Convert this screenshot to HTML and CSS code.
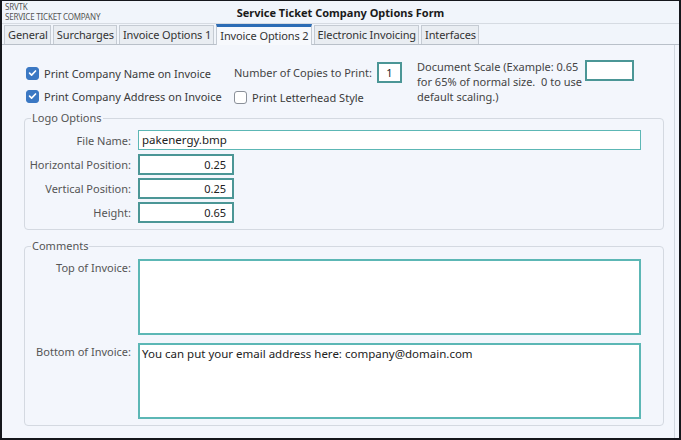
FILE: index.html
```html
<!DOCTYPE html>
<html>
<head>
<meta charset="utf-8">
<link rel="stylesheet" href="styles.css">
</head>
<body>
<div class="window">
  <div class="header">
    <div class="app-id">
      <div>SRVTK</div>
      <div>SERVICE TICKET COMPANY</div>
    </div>
    <div class="title">Service Ticket Company Options Form</div>
    <div></div>
  </div>
  <div class="tabs">
    <div class="tab">General</div>
    <div class="tab">Surcharges</div>
    <div class="tab">Invoice Options 1</div>
    <div class="tab active">Invoice Options 2</div>
    <div class="tab">Electronic Invoicing</div>
    <div class="tab">Interfaces</div>
  </div>
  <div class="panel">
    <div class="options">
      <label class="check"><span class="box checked"><svg viewBox="0 0 12 12" width="12" height="12"><path d="M2.8 6.2 L5 8.3 L9.3 3.8" fill="none" stroke="#fff" stroke-width="1.8" stroke-linecap="round" stroke-linejoin="round"/></svg></span>Print Company Name on Invoice</label>
      <div class="copies"><span>Number of Copies to Print:</span><span class="field small">1</span></div>
      <div class="scale-text">Document Scale (Example: 0.65<br>for 65% of normal size.&nbsp; 0 to use<br>default scaling.)</div>
      <div class="field scale"></div>
      <label class="check"><span class="box checked"><svg viewBox="0 0 12 12" width="12" height="12"><path d="M2.8 6.2 L5 8.3 L9.3 3.8" fill="none" stroke="#fff" stroke-width="1.8" stroke-linecap="round" stroke-linejoin="round"/></svg></span>Print Company Address on Invoice</label>
      <label class="check letter"><span class="box"></span>Print Letterhead Style</label>
    </div>

    <fieldset class="group logo">
      <legend>Logo Options</legend>
      <div class="form-rows">
        <span class="lbl">File Name:</span>
        <div class="field wide">pakenergy.bmp</div>
        <span class="lbl">Horizontal Position:</span>
        <div class="field num">0.25</div>
        <span class="lbl">Vertical Position:</span>
        <div class="field num">0.25</div>
        <span class="lbl">Height:</span>
        <div class="field num">0.65</div>
      </div>
    </fieldset>

    <fieldset class="group comments">
      <legend>Comments</legend>
      <div class="form-rows memo-rows">
        <span class="lbl top">Top of Invoice:</span>
        <div class="field memo"></div>
        <span class="lbl top">Bottom of Invoice:</span>
        <div class="field memo">You can put your email address here: company@domain.com</div>
      </div>
    </fieldset>
  </div>
</div>
</body>
</html>
```

FILE: styles.css
```css
* { box-sizing: border-box; }
html, body { margin: 0; padding: 0; background: #f3f6fc; }
body { font-family: "Noto Sans", "Open Sans", sans-serif; font-size: 11px; color: #444; }

.window {
  width: 681px;
  height: 440px;
  border: 2px solid #15171c;
  border-top-width: 1px;
  background: #f3f6fc;
  display: flex;
  flex-direction: column;
}

.header {
  height: 23px;
  display: grid;
  grid-template-columns: 1fr auto 1fr;
  align-items: center;
  border-bottom: 1px solid #d6dbe2;
  background: #f1f5fb;
}
.app-id {
  font-size: 8px;
  line-height: 10px;
  color: #555;
  padding-left: 3px;
  padding-bottom: 1px;
  letter-spacing: -0.2px;
}
.title {
  font-weight: bold;
  font-size: 11px;
  color: #1a1a1a;
  padding-top: 1px;
}

.tabs {
  height: 21px;
  display: flex;
  align-items: flex-end;
  padding-left: 2px;
  border-bottom: 1px solid #b9c0c9;
  background: #f1f5fb;
}
.tab {
  height: 19px;
  padding: 0 2px 0 3px;
  margin-right: 2px;
  border: 1px solid #c5cbd3;
  border-bottom: none;
  background: #e9edf2;
  color: #333;
  font-size: 11px;
  letter-spacing: -0.1px;
  line-height: 18px;
}
.tab.active {
  height: 21px;
  background: #f7f9fd;
  border-top: 3px solid #2c6cb5;
  line-height: 17px;
  margin-bottom: -1px;
}

.panel {
  flex: 1;
  padding: 15px 10px 0 22px;
  margin-right: 4px;
  border-right: 1px solid #d2d8e0;
}

.options {
  display: grid;
  grid-template-columns: 208px 182px 169px auto;
  grid-template-rows: 24px 22px;
  padding-left: 2px;
  margin-bottom: 6px;
}
.check {
  display: flex;
  align-items: center;
  gap: 5px;
  color: #3a3a3a;
  padding-top: 2px;
}
.box {
  width: 13px;
  height: 13px;
  border: 1px solid #8a9099;
  border-radius: 3px;
  background: #fff;
  display: inline-flex;
  align-items: center;
  justify-content: center;
}
.box.checked {
  background: #3b78c3;
  border-color: #3b78c3;
}
.copies {
  display: flex;
  align-items: center;
  gap: 5px;
  padding-top: 1px;
}
.field {
  background: #fff;
  border: 1px solid #5cb7b5;
  color: #222;
}
.field.small {
  width: 25px;
  height: 21px;
  border: 2px solid #4b9696;
  text-align: center;
  line-height: 17px;
}
.scale-text {
  grid-row: span 2;
  line-height: 15px;
  padding-left: 1px;
  margin-top: -1px;
}
.field.scale {
  width: 49px;
  height: 21px;
  border: 2px solid #4b9696;
}
.letter { padding-left: 0; padding-top: 4px; }

.group {
  margin: 0;
  border: 1px solid #d4d9e1;
  border-radius: 4px;
  padding: 0 22px 6px 0;
}
.group legend {
  padding: 0 1px;
  margin-left: 6px;
  color: #555;
  line-height: 12px;
}
.form-rows {
  display: grid;
  grid-template-columns: 106px 1fr;
  column-gap: 7px;
  row-gap: 3px;
  align-items: center;
}
.lbl {
  text-align: right;
  color: #555;
}
.field.wide {
  height: 20px;
  padding-left: 3px;
  line-height: 17px;
  font-size: 11.5px;
  margin-bottom: 1px;
}
.field.num {
  width: 96px;
  height: 21px;
  border: 2px solid #4b9696;
  text-align: right;
  padding-right: 6px;
  line-height: 17px;
}
.logo .form-rows { padding-top: 6px; }

.comments { margin-top: 10px; padding-bottom: 6px; }
.memo-rows { row-gap: 8px; align-items: start; padding-top: 7px; }
.lbl.top { padding-top: 1px; }
.field.memo {
  height: 76px;
  border: 2px solid #5cb7b5;
  padding: 1px 2px;
  font-size: 11.5px;
  line-height: 16px;
}
```
